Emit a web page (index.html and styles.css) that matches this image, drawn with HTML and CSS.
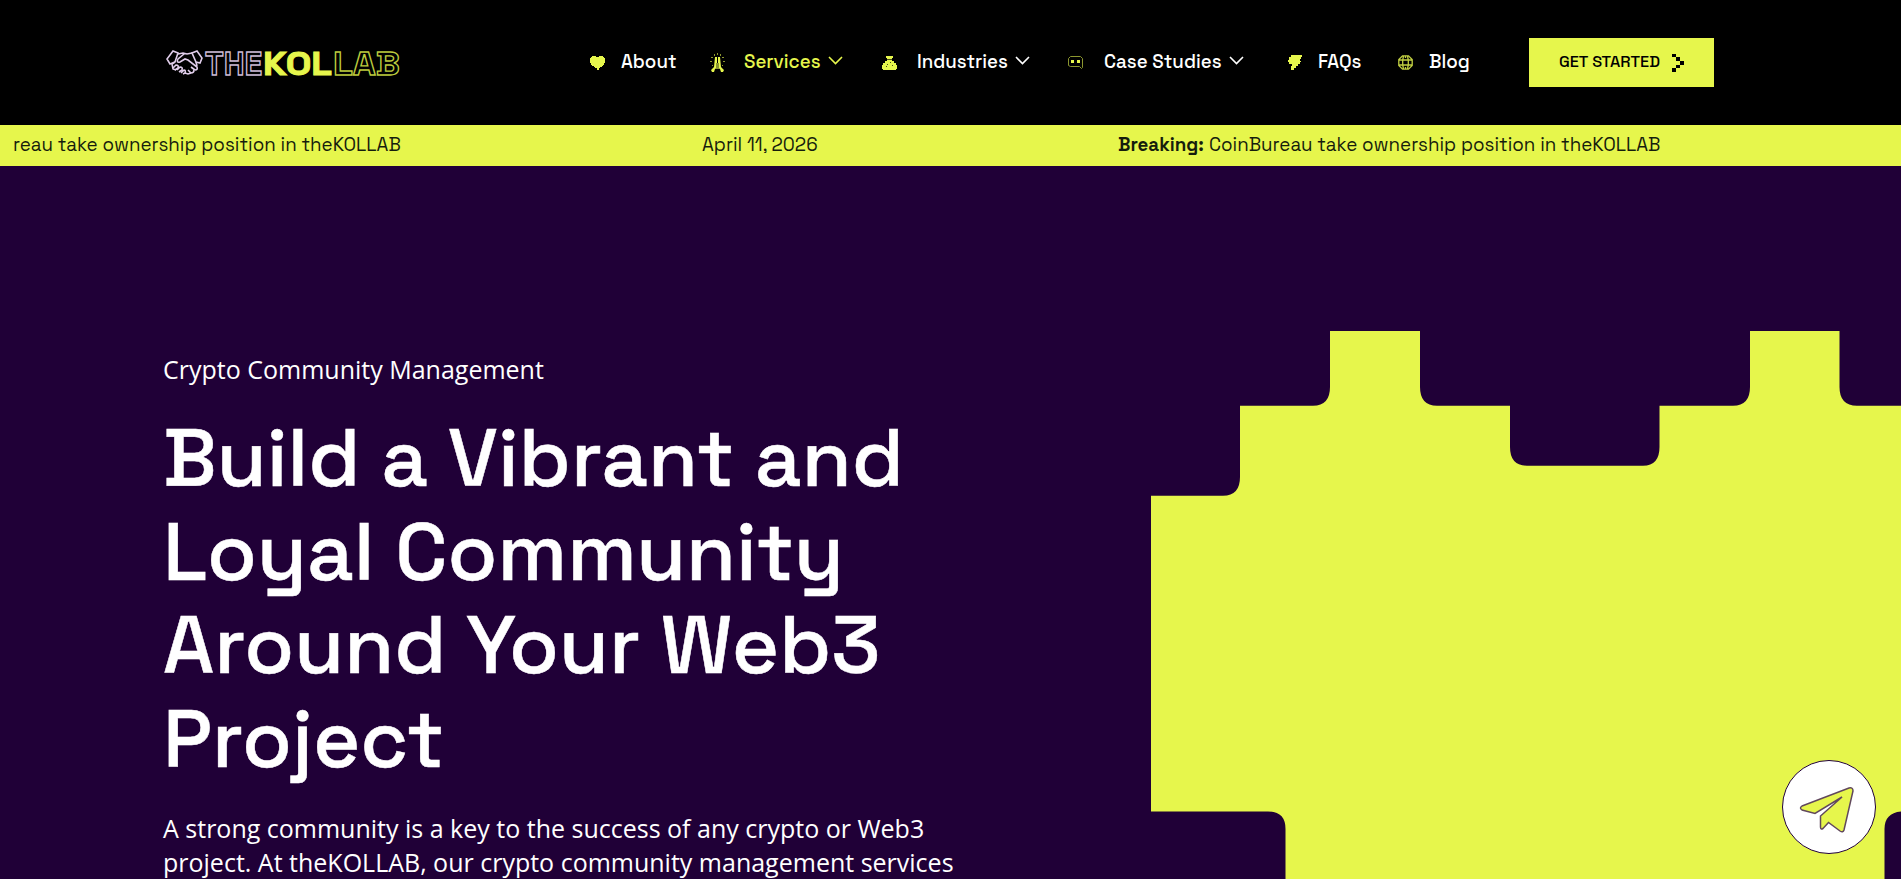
FILE: index.html
```html
<!DOCTYPE html>
<html lang="en">

<head>
    <meta charset="utf-8">
    <title>Crypto Community Management - theKOLLAB</title>
    <meta name="viewport" content="width=device-width, initial-scale=1">
    <link rel="stylesheet" href="styles.css">
</head>

<body>
    <header class="header">
        <a class="logo" href="#">
            <svg width="240" height="54" viewBox="0 -10 240 54">
                <g class="logo-hands">
                    <path d="M7 5 L12 7 L9 16 L4 18 L1 13 Z M31 5 L26 7 L30 16 L34 17 L36 12 Z" />
                    <path d="M12 8 L17 7 L21 8 L26 7 M18 8 L12 13 Q10 17 14 16 L19 13 L22 14 L31 21 Q32 24 29 24 M9 16 L6 18 L7 23 L10 24 M30 16 L31 20" />
                    <path d="M7 22 L10 19 Q13 19 12 22 L9 24 M11 24 L14 21 Q17 21 16 24 L13 26 M15 27 L18 24 Q20 24 19 27 L17 28 M19 27 L22 28 L25 27 M22 24 L25 27 Q28 27 28 24 M25 21 L29 24" />
                </g>
                <text class="logo-the" x="39" y="29" textLength="57" lengthAdjust="spacingAndGlyphs">THE</text>
                <text class="logo-kol" x="97" y="29" textLength="69" lengthAdjust="spacingAndGlyphs">KOL</text>
                <text class="logo-lab" x="167" y="29" textLength="67" lengthAdjust="spacingAndGlyphs">LAB</text>
            </svg>
        </a>
        <nav class="nav">
            <a class="nav-item about" href="#">
                <svg class="icon" viewBox="0 0 15 15"><path d="M2 1h4v1h3V1h4v1h1v1h1v5h-1v2h-1v1h-1v1h-2v1H9v2H7v-2H5v-1H4v-1H2v-1H1V8H0V3h1V2h1z" /></svg>
                <span>About</span>
            </a>
            <a class="nav-item services active" href="#">
                <svg class="icon tall" viewBox="0 0 15 19"><path d="M5 4h2v11l-2 1-1 3H2l-1-2 3-3zM8 4h2l1 10 3 3-1 2h-2l-1-3-2-1z" /><path class="dim" d="M6 10h3v6H6zM4 1h1v2H4zM10 1h1v2h-1zM1 4h2v1H1zM12 4h2v1h-2zM0 8h2v1H0zM13 8h2v1h-2zM2 12h1v1H2zM12 12h1v1h-1zM7 0h1v2H7z" /></svg>
                <span>Services</span>
                <svg class="chevron" viewBox="0 0 15 9"><path d="M1 1l6.500 6.500L14 1" /></svg>
            </a>
            <a class="nav-item industries" href="#">
                <svg class="icon" viewBox="0 0 15 15"><path d="M4 1h7v2h-1v3h2v2h2v2h1v4h-1v1H1v-1H0v-4h1V8h2V6h2V3H4z" /><path class="hole" d="M5 9h1v1H5zM8 7h1v1H8zM10 10h1v1h-1zM4 11h1v1H4zM5 4h5v1H5z" /></svg>
                <span>Industries</span>
                <svg class="chevron" viewBox="0 0 15 9"><path d="M1 1l6.500 6.500L14 1" /></svg>
            </a>
            <a class="nav-item cases" href="#">
                <svg class="icon" viewBox="0 0 15 15"><path class="outline" d="M2.500 1.500h10l2 2v9l-1 1-2-2h-9l-2-1v-7z" /><path d="M3 5h3v3H3zM9 5h3v3H9z" /></svg>
                <span>Case Studies</span>
                <svg class="chevron" viewBox="0 0 15 9"><path d="M1 1l6.500 6.500L14 1" /></svg>
            </a>
            <a class="nav-item faqs" href="#">
                <svg class="icon" viewBox="0 0 15 15"><path d="M3 0h11v2h-1v2h-1v2h1v1h-1v2h-2v2H8v2H6v2H3v-4H4V9H1V7H0V5h1V2h2z" /></svg>
                <span>FAQs</span>
            </a>
            <a class="nav-item blog" href="#">
                <svg class="icon" viewBox="0 0 15 15"><path class="globe" d="M4.500.8h6l3.700 3.700v6l-3.700 3.700h-6L.8 10.500v-6zM1 5h13M1 10h13M5.500 1L4.700 5v5l.8 4M9.500 1l.8 4v5l-.8 4M7.500 1v2M7.500 12v2" /></svg>
                <span>Blog</span>
            </a>
        </nav>
        <a class="cta" href="#">
            <span>GET STARTED</span>
            <svg width="12" height="20" viewBox="0 0 12 20"><path d="M0 1h4v3H0zM4 4h4v4H4zM8 8h4v4H8zM4 12h4v3H4zM0 15h4v4H0z" /></svg>
        </a>
    </header>

    <div class="ticker">
        <span class="news-end">reau take ownership position in theKOLLAB</span>
        <span class="date">April 11, 2026</span>
        <b>Breaking:</b>
        <span class="news">CoinBureau take ownership position in theKOLLAB</span>
    </div>

    <main class="hero">
        <div class="hero-text">
            <p class="tagline">Crypto Community Management</p>
            <h1>Build a Vibrant and<br>Loyal Community<br>Around Your Web3<br>Project</h1>
            <p class="intro">A strong community is a key to the success of any crypto or Web3<br>project. At theKOLLAB, our crypto community management services</p>
        </div>
        <svg class="hero-art" width="750" height="548" viewBox="0 0 750 548">
            <path d="M0 548V164.700H72Q89 164.700 89 146V74.700H162Q179 74.700 179 56V0H269V56Q269 74.700 286 74.700H359V116Q359 134.700 376 134.700H492Q508.500 134.700 508.500 116V74.700H582Q599 74.700 599 56V0H688.500V56Q688.500 74.700 706 74.700H750V548Z" />
            <path class="cut" d="M0 480.500H117Q134.500 480.500 134.500 498V548H0ZM750 480.500Q733.500 482 733.500 498V548H750Z" />
        </svg>
    </main>

    <a class="telegram" href="#">
        <svg width="94" height="94" viewBox="0 0 94 94">
            <circle cx="47" cy="47" r="46.500" />
            <path d="M20 46L67 28Q71 27 71 31L62 70Q61 73 58 71L46.500 62.500L41 68.500Q38.500 70 38.500 67V56L60 37L33 53.500L20 50Q17 48 20 46Z" />
        </svg>
    </a>
</body>

</html>
```
FILE: styles.css
```css
* {
    box-sizing: border-box;
}

body {
    margin: 0;
    height: 879px;
    overflow: hidden;
    background-color: #200037;
    color: white;
    font-family: "Space Grotesk", Inter, "Open Sans", sans-serif;
}

a {
    color: inherit;
    text-decoration: none;
}

svg {
    display: block;
    flex: none;
}

.header {
    display: flex;
    align-items: center;
    height: 125px;
    padding-left: 166px;
    background-color: black;
}

.logo {
    width: 424px;
}

.logo text {
    font-size: 34px;
    font-weight: 700;
}

.logo-hands {
    fill: none;
    stroke: #e0cdea;
    stroke-width: 1.6;
}

.logo .logo-the {
    fill: none;
    stroke: #cdbbd6;
    stroke-width: 1.4;
}

.logo .logo-kol {
    fill: #e6f64c;
    stroke: #e6f64c;
    stroke-width: 1;
}

.logo .logo-lab {
    fill: none;
    stroke: #bccb3e;
    stroke-width: 1.3;
}

.nav {
    display: flex;
    width: 939px;
}

.nav-item {
    display: flex;
    align-items: center;
    height: 28px;
    font-size: 18.75px;
    font-weight: 500;
    white-space: nowrap;
}

.nav-item span {
    flex: none;
    margin-left: 16px;
    margin-top: -2px;
}

.about { width: 120px; }
.services { width: 172px; }
.industries { width: 186px; }
.cases { width: 220px; }
.faqs { width: 110px; }

.services span, .industries span {
    width: 84px;
    margin-left: 19px;
}

.industries span {
    width: 98px;
    margin-left: 20px;
}

.cases span {
    width: 125px;
    margin-left: 21px;
}

.faqs span {
    margin-left: 15px;
}

.active {
    color: #e6f64c;
}

.icon {
    width: 15px;
    height: 15px;
    fill: #e6f64c;
}

.icon.tall {
    height: 19px;
}

.icon .dim {
    fill: #8b962f;
}

.icon .hole {
    fill: #4a5019;
}

.icon .outline {
    fill: none;
    stroke: #8b962f;
}

.icon .globe {
    fill: none;
    stroke: #c0ce41;
    stroke-width: 1.3;
}

.chevron {
    width: 15px;
    height: 9px;
    margin-top: -4px;
    fill: none;
    stroke: currentColor;
    stroke-width: 1.6;
}

.cta {
    display: flex;
    align-items: center;
    width: 185px;
    height: 49px;
    padding-left: 30px;
    background-color: #e6f64c;
    color: black;
    font-size: 16.3px;
    font-weight: 500;
    white-space: nowrap;
}

.cta span {
    width: 113px;
    margin-top: -2px;
}

.ticker {
    display: flex;
    height: 41px;
    padding-left: 13px;
    line-height: 40px;
    background-color: #e6f64c;
    color: #161d0c;
    font-size: 18.75px;
    white-space: nowrap;
}

.ticker .news-end { width: 689px; }
.ticker .date { width: 416px; }
.ticker b { width: 91px; }

.hero {
    display: flex;
    height: 713px;
    padding-left: 163px;
}

.hero-text {
    width: 988px;
    padding-top: 186px;
}

.tagline, .intro {
    margin: 0;
    font-family: "Open Sans", sans-serif;
    font-size: 25px;
    line-height: 34px;
}

h1 {
    margin: 26px 0 24px;
    font-size: 81.25px;
    font-weight: 500;
    line-height: 93.7px;
    white-space: nowrap;
    -webkit-text-stroke: 0.5px white;
}

.hero-art {
    margin-top: 165px;
    fill: #e6f64c;
}

.hero-art .cut {
    fill: #200037;
}

.telegram {
    position: fixed;
    right: 25px;
    bottom: 25px;
}

.telegram circle {
    fill: white;
    stroke: #200037;
}

.telegram path {
    fill: #e6f64c;
    stroke: #61485c;
    stroke-width: 1.5;
}
```
